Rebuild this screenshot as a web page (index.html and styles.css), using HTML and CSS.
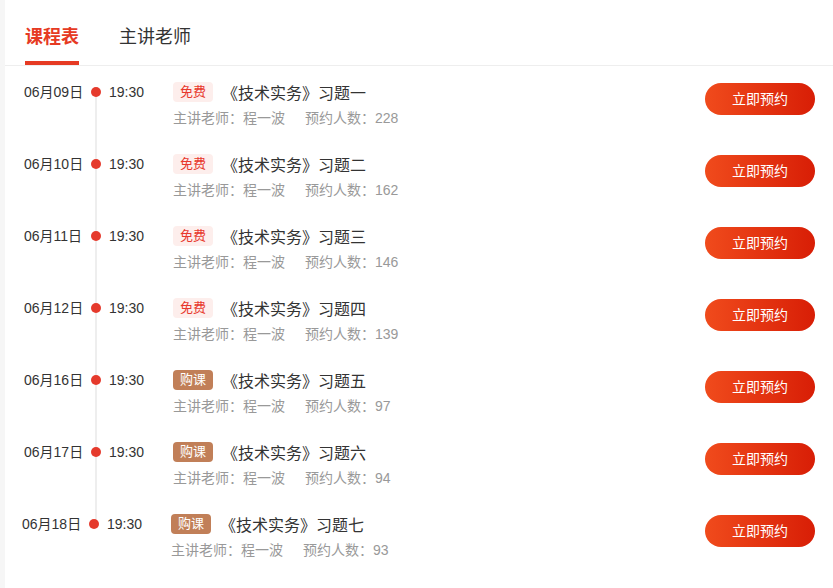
FILE: index.html
```html
<!DOCTYPE html>
<html lang="zh-CN">
<head>
  <meta charset="UTF-8">
  <title>课程表</title>
  <link rel="stylesheet" href="styles.css">
</head>
<body>
  <div class="page">
    <div class="tabs">
      <div class="tab active">课程表</div>
      <div class="tab">主讲老师</div>
    </div>
    <div class="course-list">
      <div class="row">
        <div class="date">06月09日</div>
        <div class="dot-col"><span class="dot"></span></div>
        <div class="time">19:30</div>
        <div class="info">
          <div class="title-line"><span class="tag free">免费</span><span class="title">《技术实务》习题一</span></div>
          <div class="meta"><span>主讲老师：程一波</span><span class="count">预约人数：228</span></div>
        </div>
        <button class="book-btn">立即预约</button>
      </div>
      <div class="row">
        <div class="date">06月10日</div>
        <div class="dot-col"><span class="dot"></span></div>
        <div class="time">19:30</div>
        <div class="info">
          <div class="title-line"><span class="tag free">免费</span><span class="title">《技术实务》习题二</span></div>
          <div class="meta"><span>主讲老师：程一波</span><span class="count">预约人数：162</span></div>
        </div>
        <button class="book-btn">立即预约</button>
      </div>
      <div class="row">
        <div class="date">06月11日</div>
        <div class="dot-col"><span class="dot"></span></div>
        <div class="time">19:30</div>
        <div class="info">
          <div class="title-line"><span class="tag free">免费</span><span class="title">《技术实务》习题三</span></div>
          <div class="meta"><span>主讲老师：程一波</span><span class="count">预约人数：146</span></div>
        </div>
        <button class="book-btn">立即预约</button>
      </div>
      <div class="row">
        <div class="date">06月12日</div>
        <div class="dot-col"><span class="dot"></span></div>
        <div class="time">19:30</div>
        <div class="info">
          <div class="title-line"><span class="tag free">免费</span><span class="title">《技术实务》习题四</span></div>
          <div class="meta"><span>主讲老师：程一波</span><span class="count">预约人数：139</span></div>
        </div>
        <button class="book-btn">立即预约</button>
      </div>
      <div class="row">
        <div class="date">06月16日</div>
        <div class="dot-col"><span class="dot"></span></div>
        <div class="time">19:30</div>
        <div class="info">
          <div class="title-line"><span class="tag paid">购课</span><span class="title">《技术实务》习题五</span></div>
          <div class="meta"><span>主讲老师：程一波</span><span class="count">预约人数：97</span></div>
        </div>
        <button class="book-btn">立即预约</button>
      </div>
      <div class="row">
        <div class="date">06月17日</div>
        <div class="dot-col"><span class="dot"></span></div>
        <div class="time">19:30</div>
        <div class="info">
          <div class="title-line"><span class="tag paid">购课</span><span class="title">《技术实务》习题六</span></div>
          <div class="meta"><span>主讲老师：程一波</span><span class="count">预约人数：94</span></div>
        </div>
        <button class="book-btn">立即预约</button>
      </div>
      <div class="row last">
        <div class="date">06月18日</div>
        <div class="dot-col"><span class="dot"></span></div>
        <div class="time">19:30</div>
        <div class="info">
          <div class="title-line"><span class="tag paid">购课</span><span class="title">《技术实务》习题七</span></div>
          <div class="meta"><span>主讲老师：程一波</span><span class="count">预约人数：93</span></div>
        </div>
        <button class="book-btn">立即预约</button>
      </div>
    </div>
  </div>
</body>
</html>
```

FILE: styles.css
```css
body {
  margin: 0;
  padding: 0;
  background-color: #f6f6f6;
  font-family: "Liberation Sans", "Noto Sans CJK SC", sans-serif;
  color: #333;
}

.page {
  margin-left: 5px;
  min-height: 588px;
  background-color: #fff;
}

.tabs {
  display: flex;
  gap: 40px;
  height: 65px;
  padding-left: 20px;
  border-bottom: 1px solid #eee;
}

.tab {
  box-sizing: border-box;
  height: 65px;
  padding-top: 25px;
  font-size: 18px;
  line-height: 24px;
  color: #333;
  border-bottom: 4px solid transparent;
}

.tab.active {
  font-weight: bold;
  color: #e63a23;
  border-bottom-color: #e63a23;
}

.row {
  display: flex;
  align-items: flex-start;
  box-sizing: border-box;
  height: 72px;
  padding: 15px 18px 0 19px;
}

.row.last {
  padding-left: 17px;
}

.date {
  width: 62px;
  font-size: 14px;
  line-height: 22px;
}

.dot-col {
  position: relative;
  width: 20px;
  height: 22px;
}

.dot {
  position: absolute;
  left: 5px;
  top: 6px;
  width: 10px;
  height: 10px;
  border-radius: 50%;
  background-color: #e53a2c;
  z-index: 1;
}

.dot-col::after {
  content: "";
  position: absolute;
  left: 9px;
  top: 11px;
  width: 2px;
  height: 72px;
  background-color: #eee;
}

.row.last .dot-col::after {
  display: none;
}

.time {
  width: 64px;
  padding-left: 3px;
  font-size: 14px;
  line-height: 22px;
}

.info {
  flex: 1;
}

.title-line {
  display: flex;
  align-items: center;
  height: 22px;
}

.tag {
  width: 40px;
  height: 20px;
  border-radius: 4px;
  font-size: 13px;
  line-height: 20px;
  text-align: center;
}

.tag.free {
  background-color: #fdeeec;
  color: #e8382c;
}

.tag.paid {
  background-color: #c17f58;
  color: #fff;
}

.title {
  margin-left: 9px;
  font-size: 16px;
}

.meta {
  margin-top: 5px;
  font-size: 14px;
  line-height: 20px;
  color: #999;
}

.count {
  margin-left: 20px;
}

.book-btn {
  margin-top: 2px;
  width: 110px;
  height: 32px;
  border: none;
  border-radius: 16px;
  background: linear-gradient(to right, #f04b1c, #d81e06);
  color: #fff;
  font-family: inherit;
  font-size: 14px;
  line-height: 32px;
  padding: 0;
  cursor: pointer;
}
```
